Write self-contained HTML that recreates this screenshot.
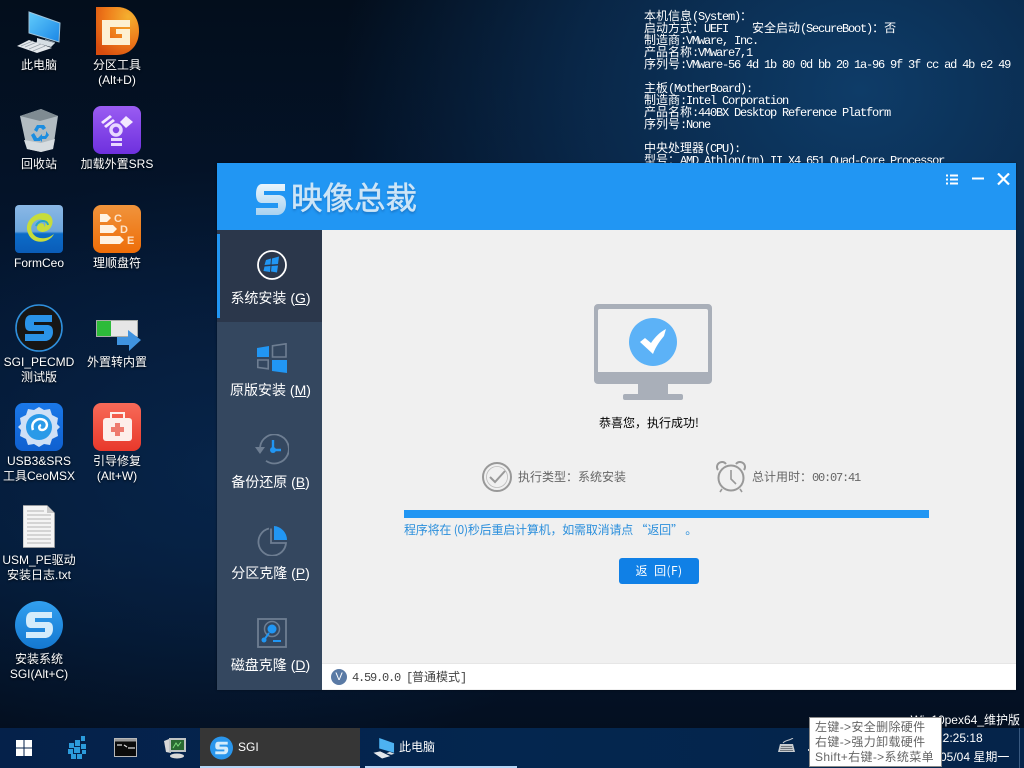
<!DOCTYPE html>
<html lang="zh">
<head>
<meta charset="utf-8">
<title>映像总裁</title>
<style>
html,body{margin:0;padding:0;width:1024px;height:768px;overflow:hidden;background:#041530}
*{box-sizing:border-box}
.abs,.ic,.lb,.txt{position:absolute}
#bg{position:absolute;left:0;top:0;width:1024px;height:768px;
background:
radial-gradient(ellipse 520px 420px at 860px 90px,rgba(14,60,104,1),rgba(11,46,84,.75) 55%,rgba(6,30,60,0) 100%),
radial-gradient(ellipse 420px 300px at 230px 470px,rgba(8,40,80,.75),rgba(6,30,60,0) 100%),
linear-gradient(180deg,#030e1c 0,#041630 40%,#041a36 70%,#040f20 95%)}
.lb{width:78px;text-align:center;color:#fff;font:12px/15px "Liberation Sans","Noto Sans CJK SC",sans-serif;text-shadow:0 1px 2px rgba(0,0,0,.8);white-space:nowrap}
.ic{display:block}
#info{position:absolute;left:644px;top:10px;width:372px;color:#fff;font:12px/12px "Liberation Mono",monospace;letter-spacing:-1.2px;white-space:pre}
#info div{height:12px}
#info i{font:normal 12px/12px "WenQuanYi Zen Hei","Noto Sans CJK SC",sans-serif;letter-spacing:0}
#win{position:absolute;left:217px;top:163px;width:799px;height:527px;background:#f0f0f0;box-shadow:0 0 2px rgba(0,0,0,.5)}
#head{position:absolute;left:0;top:0;width:799px;height:67px;background:#2196f3}
#logo{position:absolute;left:74px;top:14px;font:400 31.500px/38px "Noto Sans CJK SC",sans-serif;white-space:nowrap;color:#cde5f7;-webkit-text-stroke:.5px #cde5f7;text-shadow:0 2px 2px rgba(20,90,160,.55)}
#side{position:absolute;left:0;top:67px;width:105px;height:460px;background:#34475f}
#act{position:absolute;left:0;top:0;width:105px;height:92px;background:#2b374b}
#bar{position:absolute;left:0;top:4px;width:3px;height:84px;background:#2196f3}
.sl{position:absolute;left:0;width:105px;padding-left:2px;text-align:center;color:#fff;font:14px/18px "Liberation Sans","Noto Sans CJK SC",sans-serif;white-space:nowrap}
.m{position:absolute;font:12px/14px "WenQuanYi Zen Hei","Noto Sans CJK SC",sans-serif;white-space:nowrap}
.mono{font:12px/14px "Liberation Mono",monospace;letter-spacing:-1.2px}
#status{position:absolute;left:105px;top:500px;width:694px;height:26px;background:#fff;border-top:1px solid #e6e6e6}
#task{position:absolute;left:0;top:728px;width:1024px;height:40px;background:linear-gradient(90deg,#05214a,#04264f 50%,#05244a)}
#sgi{position:absolute;left:200px;top:728px;width:160px;height:38px;background:#363636}
.ul{position:absolute;top:766px;height:2px;background:#b5d6f7}
.tb{position:absolute;color:#fff;font:12px/16px "Liberation Sans","Noto Sans CJK SC",sans-serif;white-space:nowrap}
#tip{position:absolute;left:809px;top:717px;width:133px;height:50px;background:#fff;border:1px solid #8a8a8a;color:#666;font:12px/15px "Liberation Sans","Noto Sans CJK SC",sans-serif;letter-spacing:.35px;padding:2px 0 0 5px;white-space:nowrap}
</style>
</head>
<body>
<div id="bg"></div>

<!-- desktop icons -->
<svg class="ic" style="left:15px;top:9px" width="48" height="46" viewBox="0 0 48 46">
<defs><linearGradient id="sc" x1="0" y1="0" x2="1" y2="1"><stop offset="0" stop-color="#62ccfb"/><stop offset="1" stop-color="#1a86e6"/></linearGradient></defs>
<path d="M14 3 45 14 44 33 14 24Z" fill="url(#sc)" stroke="#9fc4dc" stroke-width="1"/>
<path d="M30 30 40 33 40 34 30 31Z" fill="#8a96a0"/>
<path d="M22 29 40 34 36 38 22 34Z" fill="#d5dde3"/>
<path d="M2 37 14 31 37 39 22 44Z" fill="#e4e8ec"/>
<path d="M6 37 18 32M10 38 22 33M14 40 26 35M18 42 30 37" stroke="#9aa4ac" stroke-width=".7"/>
</svg>
<svg class="ic" style="left:95px;top:7px" width="45" height="48" viewBox="0 0 45 48">
<defs><radialGradient id="d1" cx=".75" cy=".2" r=".95"><stop offset="0" stop-color="#f4b030"/><stop offset=".55" stop-color="#ee7a1a"/><stop offset="1" stop-color="#d84c0e"/></radialGradient></defs>
<path d="M1 0H22C35 0 44 10 44 24S35 48 22 48H1Z" fill="url(#d1)"/>
<path d="M7 13H35V20H15V31H27V27H21V22H35V38H7Z" fill="#fdf0d2"/>
</svg>
<svg class="ic" style="left:19px;top:108px" width="40" height="44" viewBox="0 0 40 44">
<path d="M1 8 22 1 39 8 34 41 22 44 8 41Z" fill="#b2bcc2"/>
<path d="M1 8 22 1 39 8 21 13Z" fill="#7f8b92"/>
<path d="M5 32 22 35 36 31 34 41 22 44 8 41Z" fill="#d6dce0"/>
<path d="M15 22 18 17H25L27 20 24 22 22 20H20L18 24ZM27 23 30 27 27 31H23V34L19 30 23 26V28H26L27 26ZM12 27 15 25 18 30H21V33H15Z" fill="#1c8de0"/>
</svg>
<svg class="ic" style="left:93px;top:106px" width="48" height="48" viewBox="0 0 48 48">
<defs><linearGradient id="p1" x1="0" y1="0" x2="0" y2="1"><stop offset="0" stop-color="#9a5cf2"/><stop offset="1" stop-color="#6e30de"/></linearGradient></defs>
<rect width="48" height="48" rx="8" fill="url(#p1)"/>
<path d="M8 16 17 9 19 11 10 18ZM11 20 20 13 22 15 13 22Z" fill="#f3e8ff"/>
<path d="M27 16 33 10 40 16 33 22Z" fill="#f3e8ff"/>
<circle cx="23" cy="24" r="5" fill="none" stroke="#e8d8ff" stroke-width="3.500"/>
<rect x="18" y="32" width="11" height="3" fill="#e8d8ff"/><rect x="18" y="37" width="11" height="3" fill="#e8d8ff"/>
</svg>

<svg class="ic" style="left:15px;top:205px" width="48" height="48" viewBox="0 0 48 48">
<defs><linearGradient id="f1" x1="0" y1="0" x2="0" y2="1"><stop offset="0" stop-color="#8ab8e6"/><stop offset=".55" stop-color="#6da6dc"/><stop offset=".6" stop-color="#0c6cc8"/><stop offset="1" stop-color="#0a5cb8"/></linearGradient></defs>
<rect width="48" height="48" rx="4" fill="url(#f1)"/>
<path d="M13 28C8 16 22 5 33 9 41 13 38 26 28 27 22 27 20 22 24 19 27 17 30 19 29 22 33 18 28 13 22 15 13 19 15 31 25 33 33 34 36 31 39 29 34 39 17 40 13 28Z" fill="#c7dc3c"/>
<path d="M21 21c2-6 11-7 12-1" fill="none" stroke="#28a6c8" stroke-width="2"/>
</svg>
<svg class="ic" style="left:93px;top:205px" width="48" height="48" viewBox="0 0 48 48">
<defs><linearGradient id="o1" x1="0" y1="0" x2="0" y2="1"><stop offset="0" stop-color="#f0943c"/><stop offset="1" stop-color="#ee6d08"/></linearGradient></defs>
<rect width="48" height="48" rx="8" fill="url(#o1)"/>
<path d="M7 9H14L18 13 14 17H7ZM7 20H20L24 24 20 28H7ZM7 31H27L31 35 27 39H7Z" fill="#fff3e2"/>
<text x="21" y="17" font-family="Liberation Sans" font-weight="700" font-size="11" fill="#fde3c8">C</text>
<text x="27" y="28" font-family="Liberation Sans" font-weight="700" font-size="11" fill="#fde3c8">D</text>
<text x="34" y="39" font-family="Liberation Sans" font-weight="700" font-size="11" fill="#fde3c8">E</text>
</svg>

<svg class="ic" style="left:15px;top:304px" width="48" height="48" viewBox="0 0 48 48">
<circle cx="24" cy="24" r="23" fill="#161616" stroke="#2f8fdc" stroke-width="1.600"/>
<path d="M16 11H37V18H19V21H32C38 21 38 26 38 28 38 33 35 37 30 37H10V30H29V27H15C10 27 10 22 10 19 10 14 12 11 16 11Z" fill="#2a93e8"/>
</svg>
<svg class="ic" style="left:96px;top:320px" width="46" height="31" viewBox="0 0 46 31">
<rect x=".5" y=".5" width="41" height="16" fill="#e6e6e6" stroke="#a8aca8"/>
<rect x="1" y="1" width="14" height="15" fill="#2dbb3a"/>
<path d="M21 17H32V10L45 20 33 31V25H21Z" fill="#3f93e0"/>
</svg>

<svg class="ic" style="left:15px;top:403px" width="48" height="48" viewBox="0 0 48 48">
<defs><linearGradient id="u1" x1="0" y1="0" x2="0" y2="1"><stop offset="0" stop-color="#1a78e8"/><stop offset="1" stop-color="#0f60d0"/></linearGradient></defs>
<rect width="48" height="48" rx="8" fill="url(#u1)"/>
<path d="M24 4l5 3 6-1 2 6 6 3-1 6 3 3-3 3 1 6-6 3-2 6-6-1-5 3-5-3-6 1-2-6-6-3 1-6-3-3 3-3-1-6 6-3 2-6 6 1Z" fill="#cfe0f6"/>
<circle cx="24" cy="24" r="13" fill="#2a9ae8"/>
<path d="M18 27c-3-8 5-13 11-10 5 3 3 10-2 10-3 0-4-4-1-5" fill="none" stroke="#fff" stroke-width="2.500"/>
</svg>
<svg class="ic" style="left:93px;top:403px" width="48" height="48" viewBox="0 0 48 48">
<defs><linearGradient id="r1" x1="0" y1="0" x2="0" y2="1"><stop offset="0" stop-color="#f76a58"/><stop offset="1" stop-color="#e8382b"/></linearGradient></defs>
<rect width="48" height="48" rx="8" fill="url(#r1)"/>
<rect x="10" y="15" width="29" height="23" rx="3" fill="#fdeeea"/>
<path d="M18 15V10H31V15" fill="none" stroke="#fdeeea" stroke-width="2"/>
<path d="M22 20h5v4h4v5h-4v4h-5v-4h-4v-5h4Z" fill="#ee7a6e"/>
</svg>

<svg class="ic" style="left:23px;top:505px" width="32" height="43" viewBox="0 0 32 43">
<path d="M0 .5H24L31.500 8V42.500H0Z" fill="#f4f4f4" stroke="#a0a0a0" stroke-width=".8"/>
<path d="M24 .5V8H31.500Z" fill="#c8c8c8"/>
<path d="M4 6H21M4 10H28M4 14H28M4 18H28M4 22H28M4 26H28M4 30H28M4 34H28M4 38H28" stroke="#b4b4b4" stroke-width="1"/>
</svg>
<svg class="ic" style="left:15px;top:601px" width="48" height="48" viewBox="0 0 48 48">
<defs><linearGradient id="s1" x1="0" y1="0" x2="0" y2="1"><stop offset="0" stop-color="#32a0f0"/><stop offset="1" stop-color="#1478d0"/></linearGradient></defs>
<circle cx="24" cy="24" r="24" fill="url(#s1)"/>
<path d="M17 11H37V17H20V21H33C38 21 38 26 38 28 38 33 35 37 30 37H11V31H30V27H16C11 27 11 22 11 19 11 14 13 11 17 11Z" fill="#d4ecfb"/>
</svg>

<div class="lb" style="left:0;top:58px">此电脑</div>
<div class="lb" style="left:78px;top:58px">分区工具<br>(Alt+D)</div>
<div class="lb" style="left:0;top:157px">回收站</div>
<div class="lb" style="left:78px;top:157px">加载外置SRS</div>
<div class="lb" style="left:0;top:256px">FormCeo</div>
<div class="lb" style="left:78px;top:256px">理顺盘符</div>
<div class="lb" style="left:0;top:355px">SGI_PECMD<br>测试版</div>
<div class="lb" style="left:78px;top:355px">外置转内置</div>
<div class="lb" style="left:0;top:454px">USB3&amp;SRS<br>工具CeoMSX</div>
<div class="lb" style="left:78px;top:454px">引导修复<br>(Alt+W)</div>
<div class="lb" style="left:0;top:553px">USM_PE驱动<br>安装日志.txt</div>
<div class="lb" style="left:0;top:652px">安装系统<br>SGI(Alt+C)</div>

<!-- system info -->
<div id="info"><div><i>本机信息</i>(System)<i>：</i></div><div><i>启动方式：</i>UEFI    <i>安全启动</i>(SecureBoot)<i>：否</i></div><div><i>制造商</i>:VMware, Inc.</div><div><i>产品名称</i>:VMware7,1</div><div><i>序列号</i>:VMware-56 4d 1b 80 0d bb 20 1a-96 9f 3f cc ad 4b e2 49</div><div></div><div><i>主板</i>(MotherBoard):</div><div><i>制造商</i>:Intel Corporation</div><div><i>产品名称</i>:440BX Desktop Reference Platform</div><div><i>序列号</i>:None</div><div></div><div><i>中央处理器</i>(CPU):</div><div><i>型号：</i>AMD Athlon(tm) II X4 651 Quad-Core Processor</div></div>

<!-- window -->
<div id="win">
  <div id="head">
    <svg class="abs" style="left:38px;top:20px" width="32" height="32" viewBox="0 0 32 32">
      <defs><linearGradient id="lg" x1="0" y1="0" x2="0" y2="1"><stop offset="0" stop-color="#eaf5fc"/><stop offset="1" stop-color="#a8d2f0"/></linearGradient></defs>
      <path d="M7 1H30V8H9V12H23C30 12 31 17 31 21 31 27 28 32 22 32H1V25H23V20H7C2 20 1 15 1 11 1 5 3 1 7 1Z" fill="url(#lg)"/>
    </svg>
    <div id="logo">映像总裁</div>
    <svg class="abs" style="left:728px;top:10px" width="66" height="16" viewBox="0 0 66 16" fill="#fff">
      <rect x="1" y="1.500" width="2" height="2"/><rect x="5" y="1.500" width="8" height="2"/>
      <rect x="1" y="5.500" width="2" height="2"/><rect x="5" y="5.500" width="8" height="2"/>
      <rect x="1" y="9.500" width="2" height="2"/><rect x="5" y="9.500" width="8" height="2"/>
      <rect x="27" y="4.500" width="12" height="2"/>
      <path d="M53 .5 64 11.500M64 .5 53 11.500" stroke="#fff" stroke-width="2.200" fill="none"/>
    </svg>
  </div>
  <div id="side">
    <div id="act"></div><div id="bar"></div>
    <svg class="abs" style="left:40px;top:20px" width="30" height="30" viewBox="0 0 30 30">
      <circle cx="15" cy="15" r="14" fill="none" stroke="#fff" stroke-width="1.800"/>
      <path d="M9 10l5-1.500-.5 6-6 .5ZM15 8.500l7-2-1 7.500-6.500.5ZM7.500 16.500l6-.5-.5 6-6.500-1ZM14.500 16l6.500-.5-1 7-6-1Z" fill="#2196f3"/>
    </svg>
    <div class="sl" style="top:59px">系统安装 (<u>G</u>)</div>

    <svg class="abs" style="left:40px;top:113px" width="30" height="30" viewBox="0 0 30 30">
      <path d="M0 5 12 3V14H0Z" fill="#2196f3"/>
      <path d="M15.500 2.800 29 .8V14H15.500Z" fill="none" stroke="#6e7e92" stroke-width="1.600"/>
      <path d="M.8 17H11.200V25.800L.8 24.400Z" fill="none" stroke="#6e7e92" stroke-width="1.600"/>
      <path d="M15 17H30V30L15 28Z" fill="#2196f3"/>
    </svg>
    <div class="sl" style="top:151px">原版安装 (<u>M</u>)</div>

    <svg class="abs" style="left:38px;top:204px" width="34" height="32" viewBox="0 0 34 32">
      <path d="M5 13A14.500 14.500 0 1 1 11 26.800" fill="none" stroke="#6e7e92" stroke-width="1.800"/>
      <path d="M0 13H10L5 20Z" fill="#6e7e92"/>
      <path d="M18 6V16H26" fill="none" stroke="#2196f3" stroke-width="2.400"/>
      <circle cx="18" cy="16" r="3" fill="#2196f3"/>
    </svg>
    <div class="sl" style="top:243px">备份还原 (<u>B</u>)</div>

    <svg class="abs" style="left:40px;top:296px" width="30" height="30" viewBox="0 0 30 30">
      <path d="M12 2.500A13.800 13.800 0 1 0 29 17H14V2.500" fill="none" stroke="#6e7e92" stroke-width="1.800"/>
      <path d="M17 0A14 14 0 0 1 30 14H17Z" fill="#2196f3"/>
    </svg>
    <div class="sl" style="top:334px">分区克隆 (<u>P</u>)</div>

    <svg class="abs" style="left:40px;top:388px" width="30" height="30" viewBox="0 0 30 30">
      <rect x="1" y="1" width="28" height="28" fill="none" stroke="#6e7e92" stroke-width="1.800"/>
      <circle cx="15" cy="11" r="7.500" fill="none" stroke="#6e7e92" stroke-width="1.500"/>
      <circle cx="15" cy="11" r="4.500" fill="#2196f3"/>
      <path d="M12 15 7 22" stroke="#2196f3" stroke-width="2"/><circle cx="7" cy="22" r="2.500" fill="#2196f3"/>
      <rect x="16" y="22" width="8" height="2" fill="#2196f3"/>
    </svg>
    <div class="sl" style="top:426px">磁盘克隆 (<u>D</u>)</div>
  </div>

  <!-- main content -->
  <svg class="abs" style="left:377px;top:141px" width="118" height="96" viewBox="0 0 118 96">
    <path d="M4 0H114A4 4 0 0 1 118 4V76A4 4 0 0 1 114 80H4A4 4 0 0 1 0 76V4A4 4 0 0 1 4 0ZM6 5A2 2 0 0 0 4 7V68H114V7A2 2 0 0 0 112 5Z" fill="#a9afb9" fill-rule="evenodd"/>
    <rect x="44" y="80" width="30" height="10" fill="#a9afb9"/>
    <rect x="29" y="90" width="60" height="6" rx="2" fill="#a9afb9"/>
    <circle cx="59" cy="38" r="24" fill="#5cb2f7"/>
    <path d="M46 38 51 34 57 39C61 33 66 28 72 25L70 32C66 37 62 42 59 50Z" fill="#fff"/>
  </svg>
  <div class="m" style="left:382px;top:253px;color:#000">恭喜您，执行成功!</div>

  <svg class="abs" style="left:265px;top:299px" width="30" height="30" viewBox="0 0 30 30">
    <circle cx="15" cy="15" r="14" fill="none" stroke="#999" stroke-width="2"/>
    <circle cx="15" cy="15" r="10.500" fill="none" stroke="#bbb" stroke-width=".8"/>
    <path d="M8 15 13 20 23 9" fill="none" stroke="#999" stroke-width="2"/>
  </svg>
  <div class="m" style="left:301px;top:307px;color:#666">执行类型：系统安装</div>
  <svg class="abs" style="left:499px;top:298px" width="30" height="32" viewBox="0 0 30 32">
    <circle cx="15" cy="17" r="12.500" fill="none" stroke="#999" stroke-width="2"/>
    <path d="M2 9A5 5 0 0 1 10 3M20 3A5 5 0 0 1 28 9" fill="none" stroke="#999" stroke-width="2"/>
    <path d="M15 9V18L20 23M6 28 4 31M24 28 26 31" fill="none" stroke="#999" stroke-width="1.600"/>
  </svg>
  <div class="m" style="left:535px;top:307px;color:#666">总计用时：<span class="mono">00:07:41</span></div>

  <div class="abs" style="left:187px;top:347px;width:525px;height:8px;background:#2196f3"></div>
  <div class="m" style="left:187px;top:360px;color:#2b8fdc;letter-spacing:-.2px">程序将在 (0)秒后重启计算机，如需取消请点 “返回” 。</div>

  <div class="abs" style="left:402px;top:395px;width:80px;height:26px;background:#1080e6;border-radius:3px;color:#fff;text-align:center;letter-spacing:.4px;font:12px/26px 'WenQuanYi Zen Hei','Noto Sans CJK SC',sans-serif">返&nbsp;&nbsp;回(F)</div>

  <div id="status">
    <div class="abs" style="left:9px;top:5px;width:16px;height:16px;border-radius:50%;background:#5a7aa5;color:#fff;text-align:center;font:11px/16px 'Liberation Sans',sans-serif">V</div>
    <div class="m" style="left:30px;top:6px;color:#444"><span class="mono">4.59.0.0 [</span>普通模式<span class="mono">]</span></div>
  </div>
</div>

<!-- taskbar -->
<div id="task"></div>
<div id="sgi"></div>
<div class="ul" style="left:200px;width:160px"></div>
<div class="ul" style="left:365px;width:152px"></div>
<svg class="ic" style="left:16px;top:740px" width="16" height="16" viewBox="0 0 16 16" fill="#fff">
<rect width="7.500" height="7.500"/><rect x="8.500" width="7.500" height="7.500"/><rect y="8.500" width="7.500" height="7.500"/><rect x="8.500" y="8.500" width="7.500" height="7.500"/>
</svg>
<svg class="ic" style="left:67px;top:735px" width="22" height="24" viewBox="0 0 22 24">
<g fill="#2c9cdc"><rect x="2" y="8" width="5" height="5"/><rect x="8" y="5" width="5" height="6"/><rect x="14" y="1" width="4" height="5"/><rect x="1" y="14" width="5" height="5"/><rect x="7" y="12" width="6" height="6"/><rect x="14" y="9" width="5" height="5"/><rect x="4" y="19" width="5" height="5"/><rect x="10" y="19" width="5" height="5"/><rect x="15" y="15" width="4" height="4"/></g>
</svg>
<svg class="ic" style="left:114px;top:738px" width="23" height="19" viewBox="0 0 23 19">
<rect x=".5" y=".5" width="22" height="18" fill="#0b0b0b" stroke="#b8b8b8"/><rect x="1" y="1" width="21" height="2.500" fill="#9a9a9a"/>
<path d="M3 7H8M10 7 13 9M14 10H21" stroke="#ddd" stroke-width="1.200"/>
</svg>
<svg class="ic" style="left:163px;top:736px" width="24" height="23" viewBox="0 0 24 23">
<path d="M1 5 6 3 8 17 3 16Z" fill="#d8d8d8"/><rect x="6" y="2" width="17" height="14" fill="#bfc4c4"/><rect x="8" y="4" width="13" height="10" fill="#2a6a32"/>
<path d="M10 12l3-5 2 3 3-4" stroke="#7ddc7d" fill="none"/><ellipse cx="14" cy="20" rx="7" ry="2.500" fill="#d8d8d8"/>
</svg>
<svg class="ic" style="left:210px;top:736px" width="23" height="24" viewBox="0 0 48 48">
<circle cx="24" cy="24" r="24" fill="#2a96ec"/>
<path d="M17 11H37V17H20V21H33C38 21 38 26 38 28 38 33 35 37 30 37H11V31H30V27H16C11 27 11 22 11 19 11 14 13 11 17 11Z" fill="#d4ecfb"/>
</svg>
<div class="tb" style="left:238px;top:739px">SGI</div>
<svg class="ic" style="left:372px;top:737px" width="24" height="22" viewBox="0 0 48 46">
<path d="M14 2 45 13V33L14 24Z" fill="#4db2f2"/><path d="M36 31 46 35 39 37 29 34Z" fill="#d5dde3"/><path d="M2 33 16 30 37 40 20 45Z" fill="#e4e8ec"/>
</svg>
<div class="tb" style="left:399px;top:739px">此电脑</div>

<svg class="ic" style="left:778px;top:738px" width="17" height="15" viewBox="0 0 17 15">
<path d="M2 6H15L17 14H0Z" fill="#c8ccd0"/><path d="M3 8.500H14M2.500 10.500H14.500M2 12.500H15" stroke="#70767c" stroke-width=".9"/><path d="M5 5C7 2 11 3 15 0" stroke="#c8ccd0" fill="none"/>
</svg>
<div class="abs" style="left:808px;top:749px;width:2px;height:2px;background:#cfd8e0"></div>
<div class="tb" style="left:875px;top:712px;width:145px;text-align:right">Win10pex64_维护版</div>
<div class="tb" style="left:936px;top:730px">12:25:18</div>
<div class="tb" style="left:940px;top:749px">05/04 星期一</div>
<div class="abs" style="left:1019px;top:728px;width:1px;height:40px;background:#3a5a80"></div>
<div id="tip">左键-&gt;安全删除硬件<br>右键-&gt;强力卸载硬件<br>Shift+右键-&gt;系统菜单</div>
</body>
</html>
